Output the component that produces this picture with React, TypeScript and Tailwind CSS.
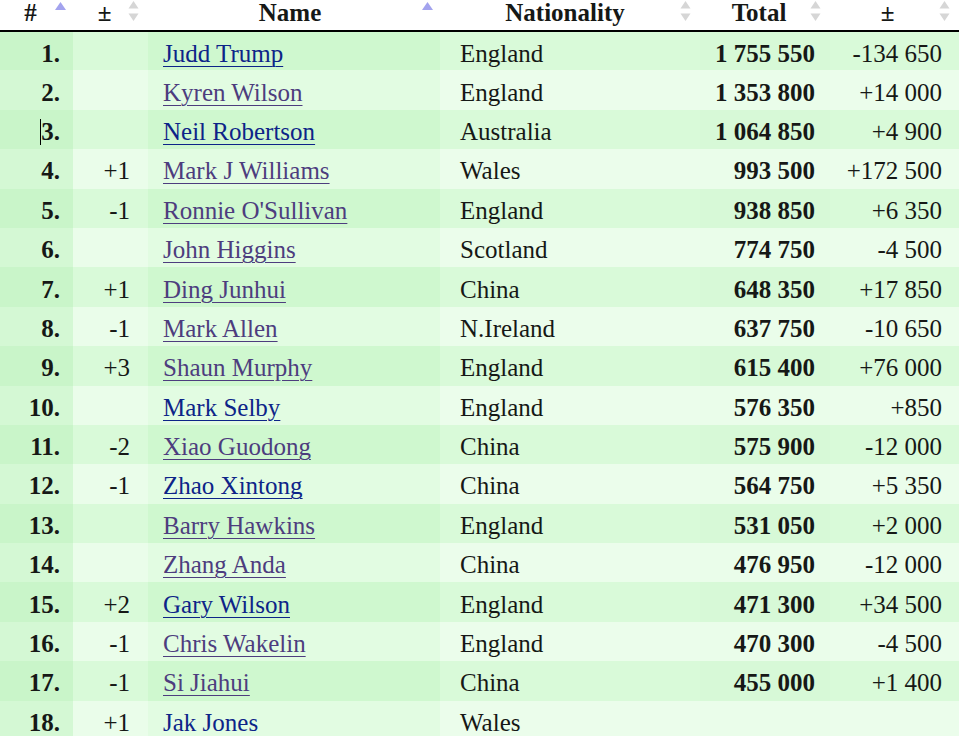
import React from "react";

type Row = {
  rank: number;
  change: string;
  name: string;
  visited: boolean;
  nation: string;
  total: string;
  diff: string;
};

const rows: Row[] = [
  { rank: 1, change: "", name: "Judd Trump", visited: false, nation: "England", total: "1 755 550", diff: "-134 650" },
  { rank: 2, change: "", name: "Kyren Wilson", visited: true, nation: "England", total: "1 353 800", diff: "+14 000" },
  { rank: 3, change: "", name: "Neil Robertson", visited: false, nation: "Australia", total: "1 064 850", diff: "+4 900" },
  { rank: 4, change: "+1", name: "Mark J Williams", visited: true, nation: "Wales", total: "993 500", diff: "+172 500" },
  { rank: 5, change: "-1", name: "Ronnie O'Sullivan", visited: true, nation: "England", total: "938 850", diff: "+6 350" },
  { rank: 6, change: "", name: "John Higgins", visited: true, nation: "Scotland", total: "774 750", diff: "-4 500" },
  { rank: 7, change: "+1", name: "Ding Junhui", visited: true, nation: "China", total: "648 350", diff: "+17 850" },
  { rank: 8, change: "-1", name: "Mark Allen", visited: true, nation: "N.Ireland", total: "637 750", diff: "-10 650" },
  { rank: 9, change: "+3", name: "Shaun Murphy", visited: true, nation: "England", total: "615 400", diff: "+76 000" },
  { rank: 10, change: "", name: "Mark Selby", visited: false, nation: "England", total: "576 350", diff: "+850" },
  { rank: 11, change: "-2", name: "Xiao Guodong", visited: true, nation: "China", total: "575 900", diff: "-12 000" },
  { rank: 12, change: "-1", name: "Zhao Xintong", visited: false, nation: "China", total: "564 750", diff: "+5 350" },
  { rank: 13, change: "", name: "Barry Hawkins", visited: true, nation: "England", total: "531 050", diff: "+2 000" },
  { rank: 14, change: "", name: "Zhang Anda", visited: true, nation: "China", total: "476 950", diff: "-12 000" },
  { rank: 15, change: "+2", name: "Gary Wilson", visited: false, nation: "England", total: "471 300", diff: "+34 500" },
  { rank: 16, change: "-1", name: "Chris Wakelin", visited: true, nation: "England", total: "470 300", diff: "-4 500" },
  { rank: 17, change: "-1", name: "Si Jiahui", visited: true, nation: "China", total: "455 000", diff: "+1 400" },
  { rank: 18, change: "+1", name: "Jak Jones", visited: false, nation: "Wales", total: "", diff: "" },
];

function SortActive() {
  return (
    <svg width="13" height="10" viewBox="0 0 13 10" className="absolute top-[1px] right-[6px]">
      <path d="M6.5 1 L12 9 L1 9 Z" fill="#a3a3ee" />
    </svg>
  );
}

function SortIdle() {
  return (
    <svg width="13" height="22" viewBox="0 0 13 22" className="absolute top-0 right-[8px]">
      <path d="M6.5 1 L11.5 8.5 L1.5 8.5 Z" fill="#d6d6d6" />
      <path d="M6.5 21 L11.5 13.5 L1.5 13.5 Z" fill="#d6d6d6" />
    </svg>
  );
}

export default function App() {
  const th = "relative h-[31px] p-0 align-top leading-[26px] font-bold text-center";
  const td = "p-0 pt-[5px] leading-[30px] align-middle";
  return (
    <div
      className="w-[959px] h-[736px] overflow-hidden bg-white text-[#161816] text-[25px]"
      style={{ fontFamily: '"Liberation Serif", "Times New Roman", serif' }}
    >
      <table className="w-[959px] table-fixed border-collapse">
        <colgroup>
          <col className="w-[73px]" />
          <col className="w-[75px]" />
          <col className="w-[292px]" />
          <col className="w-[260px]" />
          <col className="w-[130px]" />
          <col className="w-[129px]" />
        </colgroup>
        <thead>
          <tr className="border-b-2 border-black">
            <th className={th}>
              <span className="pr-[12px]">#</span>
              <SortActive />
            </th>
            <th className={th}>
              <span className="pr-[12px]">±</span>
              <SortIdle />
            </th>
            <th className={th}>
              <span className="pr-[8px]">Name</span>
              <SortActive />
            </th>
            <th className={th}>
              <span className="pr-[10px]">Nationality</span>
              <SortIdle />
            </th>
            <th className={th}>
              <span className="pr-[12px]">Total</span>
              <SortIdle />
            </th>
            <th className={th}>
              <span className="pr-[14px]">±</span>
              <SortIdle />
            </th>
          </tr>
        </thead>
        <tbody>
          {rows.map((r, i) => {
            const odd = i % 2 === 0;
            return (
              <tr key={r.rank} className="h-[39.4px]">
                <td className={`${td} pr-[13px] text-right font-bold ${odd ? "bg-[#c9f5c9]" : "bg-[#d4f8d4]"}`}>
                  {r.rank === 3 && <span className="inline-block w-px h-[26px] bg-black align-[-5px]" />}
                  {r.rank}.
                </td>
                <td className={`${td} pr-[18px] text-right ${odd ? "bg-[#d9fad9]" : "bg-[#eafdea]"}`}>
                  {r.change}
                </td>
                <td className={`${td} pl-[15px] ${odd ? "bg-[#cff8cf]" : "bg-[#e2fce2]"}`}>
                  <a
                    href="#"
                    className={`${r.rank === 18 ? "no-underline" : "underline decoration-1 underline-offset-[4px]"} ${
                      r.visited ? "text-[#4d3d7e]" : "text-[#0d2488]"
                    }`}
                  >
                    {r.name}
                  </a>
                </td>
                <td className={`${td} pl-[20px] ${odd ? "bg-[#d9fad9]" : "bg-[#ebfdeb]"}`}>
                  {r.nation}
                </td>
                <td className={`${td} pr-[15px] text-right font-bold ${odd ? "bg-[#d7f9d7]" : "bg-[#eafdea]"}`}>
                  {r.total}
                </td>
                <td className={`${td} pr-[17px] text-right ${odd ? "bg-[#d9fad9]" : "bg-[#ebfdeb]"}`}>
                  {r.diff}
                </td>
              </tr>
            );
          })}
        </tbody>
      </table>
    </div>
  );
}
